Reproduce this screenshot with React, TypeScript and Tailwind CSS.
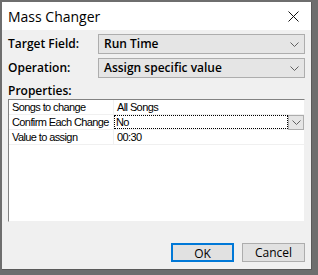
import { useState } from 'react';

const ui = { fontFamily: '"Open Sans", "Noto Sans", sans-serif' };
const grid = { fontFamily: '"Liberation Sans", Arial, sans-serif' };

function Chevron({ className = '' }: { className?: string }) {
  return (
    <svg width="9" height="5" viewBox="0 0 9 5" className={className}>
      <path d="M0.5 0.5 L4.5 4.5 L8.5 0.5" fill="none" stroke="#606060" strokeWidth="1" />
    </svg>
  );
}

function Combo({ value }: { value: string }) {
  return (
    <div className="flex h-[20px] flex-1 items-center justify-between border border-[#adadad] bg-[#e5e5e5] pl-[5px] pr-[5px]">
      <span className="text-[12px] font-semibold text-black">{value}</span>
      <Chevron />
    </div>
  );
}

function Field({ label, value }: { label: string; value: string }) {
  return (
    <div className="flex items-center">
      <span className="w-[90px] text-[12px] font-semibold text-black">{label}</span>
      <Combo value={value} />
    </div>
  );
}

const rows = [
  { name: 'Songs to change', value: 'All Songs' },
  { name: 'Confirm Each Change', value: 'No', editing: true },
  { name: 'Value to assign', value: '00:30' },
];

export default function App() {
  const [focused] = useState(1);

  return (
    <div className="h-[275px] w-[318px] bg-[#6e6e6e] pl-[2px] pt-[2px]" style={ui}>
      <div className="flex h-[268px] w-[310px] flex-col border-r border-b border-[#5a5a5a] bg-[#f0f0f0]">
        {/* title bar */}
        <div className="flex h-[28px] items-center justify-between bg-white pl-[6px] pr-[12px]">
          <span className="text-[14px] text-black">Mass Changer</span>
          <svg width="11" height="11" viewBox="0 0 11 11">
            <path d="M0.5 0.5 L10.5 10.5 M10.5 0.5 L0.5 10.5" stroke="#111" strokeWidth="1" />
          </svg>
        </div>

        <div className="flex flex-1 flex-col px-[6px] pt-[4px]">
          <div className="flex flex-col gap-[4px]">
            <Field label="Target Field:" value="Run Time" />
            <Field label="Operation:" value="Assign specific value" />
          </div>

          <div className="mt-[5px] text-[12px] font-semibold leading-[16px] text-black">Properties:</div>

          <div className="h-[123px] border-t border-l border-[#828282] border-r border-r-[#f0f0f0] border-b border-b-[#f0f0f0] bg-white text-[11px] tracking-[-0.6px] text-black" style={grid}>
            {rows.map((r, i) => (
              <div key={r.name} className="flex h-[15px] border-b border-[#f0f0f0]">
                <div className="w-[105px] shrink-0 overflow-hidden whitespace-nowrap border-r border-[#f0f0f0] pl-[3px] leading-[14px]">{r.name}</div>
                {r.editing && focused === i ? (
                  <div className="flex flex-1 items-center">
                    <div className="flex-1 whitespace-nowrap border border-dotted border-black pl-[1px] leading-[12px]">{r.value}</div>
                    <div className="flex h-[15px] w-[16px] items-center justify-center border border-[#adadad] bg-[#e5e5e5]">
                      <Chevron />
                    </div>
                  </div>
                ) : (
                  <div className="flex-1 whitespace-nowrap pl-[3px] leading-[14px]">{r.value}</div>
                )}
              </div>
            ))}
          </div>

          <div className="mt-[21px] flex justify-end gap-[8px]">
            <button className="h-[19px] w-[63px] border-2 border-[#0078d7] bg-[#e1e1e1] text-[12px] text-black">OK</button>
            <button className="h-[19px] w-[63px] border border-[#adadad] bg-[#e1e1e1] text-[12px] text-black">Cancel</button>
          </div>
        </div>
      </div>
    </div>
  );
}
